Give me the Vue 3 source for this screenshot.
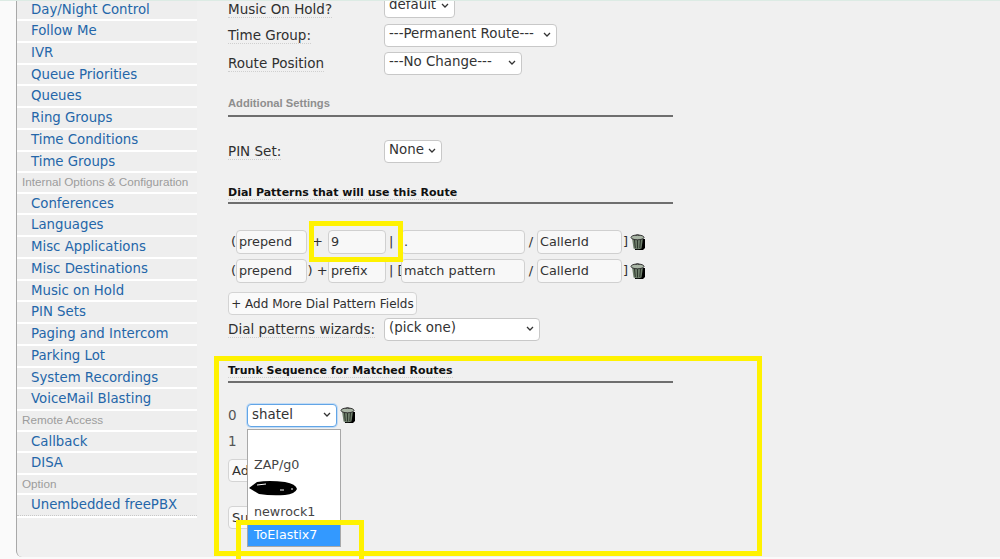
<script setup>
const menu = [
  { label: 'Day/Night Control' },
  { label: 'Follow Me' },
  { label: 'IVR' },
  { label: 'Queue Priorities' },
  { label: 'Queues' },
  { label: 'Ring Groups' },
  { label: 'Time Conditions' },
  { label: 'Time Groups' },
  { label: 'Internal Options & Configuration', head: true },
  { label: 'Conferences' },
  { label: 'Languages' },
  { label: 'Misc Applications' },
  { label: 'Misc Destinations' },
  { label: 'Music on Hold' },
  { label: 'PIN Sets' },
  { label: 'Paging and Intercom' },
  { label: 'Parking Lot' },
  { label: 'System Recordings' },
  { label: 'VoiceMail Blasting' },
  { label: 'Remote Access', head: true },
  { label: 'Callback' },
  { label: 'DISA' },
  { label: 'Option', head: true },
  { label: 'Unembedded freePBX', last: true }
]

const patterns = [
  { open: '(', prepend: 'prepend', plus: '+', prefix: '9', mid: '|', match: '.', id: 'CallerId' },
  { open: '(', prepend: 'prepend', plus: ') +', prefix: 'prefix', mid: '| [', match: 'match pattern', id: 'CallerId' }
]

const trunks = ['', 'ZAP/g0', '', 'newrock1', 'ToElastix7']
</script>

<template>
  <div class="page">
    <aside class="side">
      <div
        v-for="item in menu"
        :key="item.label"
        class="side-item"
        :class="{ head: item.head, last: item.last }"
      >{{ item.label }}</div>
    </aside>

    <main class="main">
      <div class="row moh">
        <span class="lbl-wrap"><span class="lbl">Music On Hold?</span></span>
        <select class="w-default"><option>default</option></select>
      </div>
      <div class="row">
        <span class="lbl-wrap"><span class="lbl">Time Group:</span></span>
        <select class="w-time"><option>---Permanent Route---</option></select>
      </div>
      <div class="row">
        <span class="lbl-wrap"><span class="lbl">Route Position</span></span>
        <select class="w-pos"><option>---No Change---</option></select>
      </div>

      <h5 class="section muted first">Additional Settings</h5>

      <div class="row pin">
        <span class="lbl-wrap"><span class="lbl">PIN Set:</span></span>
        <select class="w-pin"><option>None</option></select>
      </div>

      <h5 class="section dial"><span class="lbl">Dial Patterns that will use this Route</span></h5>

      <div class="patterns">
        <div v-for="(p, i) in patterns" :key="i" class="pattern">
          <span class="open">{{ p.open }}</span>
          <input type="text" :value="p.prepend" />
          <span class="sep">{{ p.plus }}</span>
          <input type="text" :value="p.prefix" />
          <span class="mid">{{ p.mid }}</span>
          <input type="text" :value="p.match" />
          <span class="sep">/</span>
          <input type="text" :value="p.id" />
          <span class="close">]</span>
          <svg class="trash" viewBox="0 0 16 16"><use href="#trash" /></svg>
        </div>
      </div>

      <button class="btn" type="button">+ Add More Dial Pattern Fields</button>

      <div class="row wizard">
        <span class="lbl-wrap"><span class="lbl">Dial patterns wizards:</span></span>
        <select class="w-wiz"><option>(pick one)</option></select>
      </div>

      <h5 class="section trunk"><span class="lbl">Trunk Sequence for Matched Routes</span></h5>

      <div class="seq">
        <span class="seq-no">0</span>
        <select class="w-trunk"><option>shatel</option></select>
        <svg class="trash seq-trash" viewBox="0 0 16 16"><use href="#trash" /></svg>
      </div>
      <div class="seq second"><span class="seq-no">1</span></div>
      <button class="btn small add" type="button">Ad</button>
      <button class="btn small" type="button">Su</button>

      <ul class="dropdown">
        <li v-for="(t, i) in trunks" :key="i" :class="{ on: t === 'ToElastix7' }">{{ t }}</li>
        <svg class="scribble" viewBox="0 0 50 16">
          <path d="M0 8 L8 2 Q20 0 36 2 Q47 4 48 9 Q46 14 36 15 Q22 16 10 14 Z" fill="#000" />
          <path d="M8 5 L17 4 M31 10 L35 10 M42 9 L44 9" stroke="#fff" stroke-width="1" />
        </svg>
      </ul>
    </main>

    <div class="mark mark-big"></div>
    <div class="mark mark-nine"></div>
    <div class="mark mark-opt"></div>

    <svg class="defs" width="0" height="0">
      <defs>
        <g id="trash">
          <path d="M4 5 H15 V14 L13 16 H5 Z" fill="#000" />
          <path d="M2 4 L3.5 14.5 Q7.5 16 11.5 14.5 L13 4 Z" fill="#6f7f6c" />
          <path d="M4.5 6 L5.3 14 M7.5 6 V14.5 M10.5 6 L9.8 14" stroke="#2f382e" stroke-width="1" />
          <ellipse cx="7.5" cy="3.4" rx="6.5" ry="2.4" fill="#a9b5a5" stroke="#333" stroke-width="1" />
          <path d="M5.5 1.5 Q7.5 0 9.5 1.5" fill="none" stroke="#333" />
        </g>
      </defs>
    </svg>
  </div>
</template>

<style scoped>
.page {
  position: relative;
  display: flex;
  width: 1000px;
  height: 559px;
  overflow: hidden;
  box-sizing: border-box;
  padding: 1px 0 2px 16px;
  background: #fafafa;
  border-top: 1px solid #dcebe4;
  font-family: "DejaVu Sans", Verdana, sans-serif;
  font-size: 13.5px;
  color: #2f2f2f;
}
.side {
  flex: 0 0 181px;
  box-sizing: border-box;
  margin-top: -2px;
  background: #f0f0f0;
  border-left: 1px solid #a8a8a8;
  border-bottom-left-radius: 6px;
  overflow: hidden;
}
.side-item {
  box-sizing: border-box;
  height: 21.75px;
  padding-left: 14px;
  line-height: 19.5px;
  background: #eeeeee;
  border-bottom: 2px solid #fff;
  color: #2466a9;
  font-size: 13.3px;
  white-space: nowrap;
}
.side-item:first-child {
  height: 21px;
  line-height: 19px;
}
.side-item.head {
  height: 20.4px;
  padding-left: 5px;
  line-height: 18.5px;
  font-family: "Liberation Sans", Arial, sans-serif;
  font-size: 11.7px;
  color: #9c9c9c;
}
.side-item.last {
  height: 21px;
  line-height: 19px;
  border-bottom: 1px dotted #c8c8c8;
  box-shadow: 0 2px 0 #fff;
}
.main {
  position: relative;
  flex: 1;
  margin-top: -2px;
  padding: 0 0 0 31px;
  background: #f0f0f0;
  min-width: 0;
}
.row {
  display: flex;
  align-items: flex-start;
  height: 28px;
}
.moh {
  margin-top: -2px;
  height: 26px;
}
.lbl-wrap {
  flex: 0 0 156px;
  padding-top: 3px;
}
.lbl {
  border-bottom: 1px dotted #cfcfcf;
}
select {
  appearance: none;
  height: 23px;
  box-sizing: border-box;
  padding: 0 0 5px 4px;
  font: 13.4px "DejaVu Sans", Verdana, sans-serif;
  color: #333;
  background: #fff url("data:image/svg+xml,%3Csvg xmlns='http://www.w3.org/2000/svg' width='8' height='5'%3E%3Cpath d='M1 1l3 3 3-3' fill='none' stroke='%23333' stroke-width='1.3'/%3E%3C/svg%3E") no-repeat right 5px top 7px;
  border: 1px solid #c8c8c8;
  border-radius: 4px;
}
.w-default { width: 71px; margin-top: -3px; }
.w-time { width: 173px; }
.w-pos { width: 138px; }
.w-pin { width: 58px; }
.w-wiz { width: 156px; }
.w-trunk {
  width: 90px;
  height: 23px;
  padding-bottom: 2px;
  border-color: #62a5e6;
  box-shadow: 0 0 0 1px #c3dcf5;
}
.section {
  width: 445px;
  box-sizing: border-box;
  margin: 0;
  font-size: 11px;
  line-height: 15px;
  border-bottom: 2px solid #6e6e6e;
  color: #111;
}
.section.muted {
  font-family: "Liberation Sans", Arial, sans-serif;
  font-size: 11.2px;
  color: #8e8e8e;
}
.first { margin-top: 16px; padding-bottom: 4px; }
.pin { margin-top: 23px; height: 30px; }
.dial { margin-top: 15px; padding-bottom: 2px; }
.patterns {
  margin-top: 23px;
}
.pattern {
  display: grid;
  grid-template-columns: 8px 71px 21px 58px 15px 124px 12px 85px 8px 16px;
  align-items: center;
  height: 29px;
  font-size: 13px;
}
.pattern .sep {
  text-align: center;
  white-space: nowrap;
}
.open {
  text-align: right;
}
.mid {
  padding-left: 3px;
  white-space: nowrap;
}
.close {
  padding-left: 1px;
}
input {
  width: 100%;
  height: 24px;
  box-sizing: border-box;
  padding: 0 1px 0 2px;
  font: 12.8px "DejaVu Sans", Verdana, sans-serif;
  color: #333;
  background: #f8f8f8;
  border: 1px solid #d0d0d0;
  border-radius: 4px;
  outline: none;
}
.trash {
  display: block;
  width: 16px;
  height: 16px;
}
.btn {
  display: block;
  box-sizing: border-box;
  width: 189px;
  height: 23px;
  margin-top: 7px;
  padding: 0;
  font: 12px "DejaVu Sans", Verdana, sans-serif;
  color: #2f2f2f;
  background: #fafafa;
  border: 1px solid #d4d4d4;
  border-radius: 4px;
  white-space: nowrap;
}
.wizard {
  margin-top: 3px;
  height: 28px;
}
.trunk {
  margin-top: 17px;
  padding-bottom: 3px;
}
.seq {
  display: flex;
  align-items: center;
  margin-top: 20px;
  height: 24px;
}
.seq-no {
  flex: 0 0 19px;
  color: #555;
}
.seq-trash {
  margin-left: 3px;
}
.second {
  margin-top: 3px;
  height: 22px;
}
.btn.small {
  width: 60px;
  margin-top: 0;
  text-align: left;
  padding-left: 3px;
  font-size: 13px;
}
.btn.add {
  margin-top: 7px;
}
.btn.add + .btn {
  margin-top: 24px;
}
.dropdown {
  position: absolute;
  left: 50px;
  top: 429px;
  width: 94px;
  height: 118px;
  margin: 0;
  padding: 0;
  box-sizing: border-box;
  list-style: none;
  background: #fff;
  border: 1px solid #a8a8a8;
  font-size: 12.7px;
}
.dropdown li {
  height: 23.3px;
  line-height: 23px;
  padding-left: 6px;
  color: #444;
}
.dropdown li.on {
  background: #3399ff;
  color: #fff;
}
.scribble {
  position: absolute;
  left: 1px;
  top: 50px;
  width: 50px;
  height: 16px;
}
.mark {
  position: absolute;
  box-sizing: border-box;
  border: 5px solid #fff200;
  pointer-events: none;
}
.mark-big {
  left: 214px;
  top: 355px;
  width: 548px;
  height: 200px;
}
.mark-nine {
  left: 309px;
  top: 220px;
  width: 94px;
  height: 41px;
}
.mark-opt {
  left: 236px;
  top: 519px;
  width: 128px;
  height: 50px;
}
.defs {
  position: absolute;
}
</style>
